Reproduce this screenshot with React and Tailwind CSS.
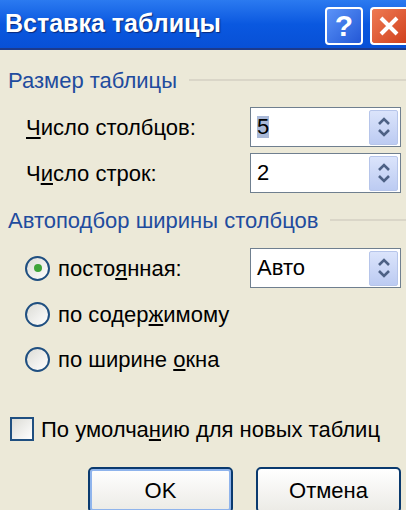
import React from 'react';

const font = { fontFamily: '"Liberation Sans", Arial, sans-serif' };

const Spinner = () => (
  <div className="ml-auto mr-[2px] flex h-[35px] w-[29px] flex-col items-center justify-center rounded-[2px] border border-[#b6c5ea] bg-gradient-to-b from-[#dbe4fb] to-[#bccbf2]">
    <svg width="14" height="24" viewBox="0 0 14 24" fill="none">
      <path d="M2 9 L7 4 L12 9" stroke="#4d6185" strokeWidth="2.6" />
      <path d="M2 15 L7 20 L12 15" stroke="#4d6185" strokeWidth="2.6" />
    </svg>
  </div>
);

const SpinBox = ({ value, selected }) => (
  <div className="flex h-[40px] w-[151px] items-center border border-[#6f7f8f] bg-white pl-[6px]">
    <span className={selected ? 'bg-[#a9b9d8] text-[22px] leading-none' : 'text-[22px] leading-none'}>{value}</span>
    <Spinner />
  </div>
);

const GroupTitle = ({ children }) => (
  <div className="flex h-[28px] items-center pl-[8px]">
    <span className="whitespace-nowrap text-[22px] text-[#1f4c9e]">{children}</span>
    <div className="ml-[12px] h-0 flex-1 border-t-2 border-[#dad6c8]" />
  </div>
);

const Radio = ({ checked }) => (
  <div className="flex h-[25px] w-[25px] items-center justify-center rounded-full border-2 border-[#1f4f80] bg-gradient-to-br from-[#dcdcd6] to-white">
    {checked && <div className="h-[8px] w-[8px] rounded-full bg-[#3ea53a]" />}
  </div>
);

export default function App() {
  return (
    <div className="h-[510px] w-[406px] overflow-hidden bg-[#ece9d8] text-black" style={font}>
      <div className="flex h-[50px] items-center justify-between border-b-2 border-[#1c3a8c] bg-gradient-to-b from-[#2b7af0] via-[#0a58e0] to-[#0850d6] pl-[5px]">
        <span className="text-[25px] font-bold text-white [text-shadow:1px_1px_1px_#0a2a7a]">Вставка таблицы</span>
        <div className="flex gap-[7px] self-start pt-[7px]">
          <div className="flex h-[38px] w-[38px] items-center justify-center rounded-[4px] border-2 border-white bg-gradient-to-br from-[#5b93f8] to-[#2457d6] text-[30px] font-bold leading-none text-white">?</div>
          <div className="flex h-[38px] w-[36px] items-center justify-center rounded-l-[4px] border-2 border-r-0 border-white bg-gradient-to-br from-[#ee7a52] to-[#d1401c]">
            <svg width="22" height="22" viewBox="0 0 22 22">
              <path d="M3 3 L19 19 M19 3 L3 19" stroke="white" strokeWidth="4" />
            </svg>
          </div>
        </div>
      </div>

      <div className="mt-[16px]">
        <GroupTitle>Размер таблицы</GroupTitle>
      </div>

      <div className="mt-[13px] flex items-center pl-[26px] pr-[5px]">
        <span className="text-[22px]"><u>Ч</u>исло столбцов:</span>
        <div className="ml-auto"><SpinBox value="5" selected /></div>
      </div>
      <div className="mt-[6px] flex items-center pl-[26px] pr-[5px]">
        <span className="text-[22px]">Ч<u>и</u>сло строк:</span>
        <div className="ml-auto"><SpinBox value="2" /></div>
      </div>

      <div className="mt-[13px]">
        <GroupTitle>Автоподбор ширины столбцов</GroupTitle>
      </div>

      <div className="mt-[14px] flex h-[40px] items-center pl-[25px] pr-[5px]">
        <Radio checked />
        <span className="ml-[8px] text-[22px]">посто<u>я</u>нная:</span>
        <div className="ml-auto"><SpinBox value="Авто" /></div>
      </div>
      <div className="mt-[6px] flex h-[40px] items-center pl-[25px]">
        <Radio />
        <span className="ml-[8px] text-[22px]">по содер<u>ж</u>имому</span>
      </div>
      <div className="mt-[5px] flex h-[40px] items-center pl-[25px]">
        <Radio />
        <span className="ml-[8px] text-[22px]">по ширине <u>о</u>кна</span>
      </div>

      <div className="mt-[36px] flex h-[28px] items-center pl-[10px]">
        <div className="h-[24px] w-[24px] border-2 border-[#1f4f80] bg-gradient-to-br from-[#dcdcd6] to-white" />
        <span className="ml-[7px] text-[22px]">По умолча<u>н</u>ию для новых таблиц</span>
      </div>

      <div className="mt-[24px] flex gap-[23px] pl-[88px]">
        <div className="flex h-[46px] w-[145px] items-center justify-center rounded-[5px] border-2 border-[#0a3a6e] bg-gradient-to-b from-white to-[#ecebe6] text-[22px] shadow-[inset_0_0_0_2px_#8fb4ec]">OK</div>
        <div className="flex h-[46px] w-[145px] items-center justify-center rounded-[5px] border-2 border-[#0a3a6e] bg-gradient-to-b from-white to-[#ecebe6] text-[22px]">Отмена</div>
      </div>
    </div>
  );
}
